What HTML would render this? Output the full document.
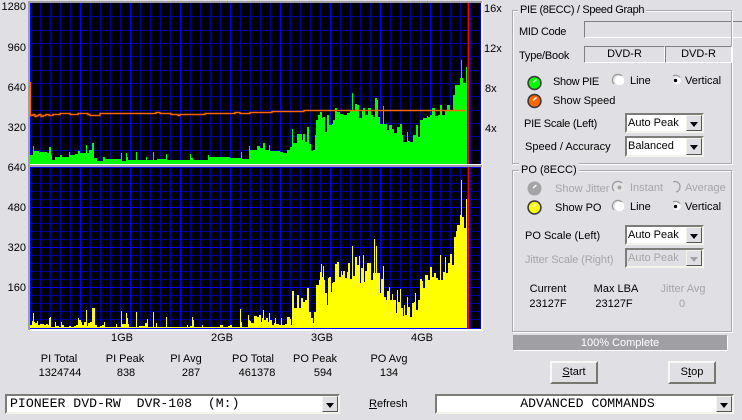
<!DOCTYPE html>
<html><head><meta charset="utf-8"><style>
html,body{margin:0;padding:0;width:742px;height:420px;overflow:hidden;background:#e0dfe3}
body{position:relative;font:11px/14px "Liberation Sans",sans-serif;color:#000}
.t{position:absolute;white-space:nowrap;height:14px;line-height:14px}
.c{transform:translateX(-50%)}
.r{text-align:right}
.g{color:#a6a6a8}
.gb{position:absolute;border:1px solid #a9a9ab;box-shadow:inset 1px 1px 0 #fff,1px 1px 0 #fff}
.lg{position:absolute;background:#e0dfe3;padding:0 2px;height:14px;line-height:14px;white-space:nowrap}
.sk{position:absolute;box-sizing:border-box;border:1px solid;border-color:#808080 #fff #fff #808080}
.cb{position:absolute;box-sizing:border-box;background:#fff;border:2px solid;border-color:#7c7c78 #f4f3ec #f4f3ec #7c7c78;outline:0;line-height:17px;padding-left:1px;white-space:nowrap}
.cb.d{background:#e0dfe3;color:#a6a6a8}
.ar{position:absolute;right:0;top:0;bottom:0;width:16px;background:#e0dfe3;box-sizing:border-box;border:1px solid;border-color:#f4f3ec #555 #555 #f4f3ec}
.ar:after{content:"";position:absolute;left:3px;top:6px;border:4px solid transparent;border-top:5px solid #000;border-bottom:0}
.cb.d .ar:after{border-top-color:#a0a0a0}
.mono{font:13.2px/16px "Liberation Mono",monospace;white-space:pre;padding-left:3px}
.btn{position:absolute;box-sizing:border-box;width:48px;height:23px;background:#e0dfe3;border:2px solid;border-color:#f8f8f6 #77776f #77776f #f8f8f6;text-align:center;line-height:19px}
</style></head><body>
<svg style="position:absolute;left:0;top:0" width="742" height="420" shape-rendering="crispEdges">
<rect x="28" y="0" width="455" height="331" fill="#fff"/>
<rect x="28" y="0" width="455" height="1" fill="#e0dfe3"/>
<rect x="28" y="1" width="454" height="2" fill="#a0a0a4"/>
<rect x="28" y="1" width="2" height="329" fill="#a0a0a4"/>
<rect x="28" y="165" width="454" height="2" fill="#a0a0a4"/>
<rect x="30" y="3" width="451" height="161" fill="#000"/>
<rect x="30" y="167" width="451" height="162" fill="#000"/>
<path fill="none" stroke="#00009c" d="M40.5 3V164M50.5 3V164M60.5 3V164M70.5 3V164M90.5 3V164M100.5 3V164M110.5 3V164M120.5 3V164M140.5 3V164M150.5 3V164M160.5 3V164M170.5 3V164M190.5 3V164M200.5 3V164M210.5 3V164M220.5 3V164M240.5 3V164M250.5 3V164M260.5 3V164M270.5 3V164M290.5 3V164M300.5 3V164M310.5 3V164M320.5 3V164M340.5 3V164M350.5 3V164M360.5 3V164M370.5 3V164M390.5 3V164M400.5 3V164M410.5 3V164M420.5 3V164M440.5 3V164M450.5 3V164M460.5 3V164M470.5 3V164
M40.5 167V329M50.5 167V329M60.5 167V329M70.5 167V329M90.5 167V329M100.5 167V329M110.5 167V329M120.5 167V329M140.5 167V329M150.5 167V329M160.5 167V329M170.5 167V329M190.5 167V329M200.5 167V329M210.5 167V329M220.5 167V329M240.5 167V329M250.5 167V329M260.5 167V329M270.5 167V329M290.5 167V329M300.5 167V329M310.5 167V329M320.5 167V329M340.5 167V329M350.5 167V329M360.5 167V329M370.5 167V329M390.5 167V329M400.5 167V329M410.5 167V329M420.5 167V329M440.5 167V329M450.5 167V329M460.5 167V329M470.5 167V329
M30 16.5H481M30 30.5H481M30 43.5H481M30 56.5H481M30 70.5H481M30 83.5H481M30 96.5H481M30 110.5H481M30 123.5H481M30 136.5H481M30 150.5H481
M30 175.5H481M30 183.5H481M30 191.5H481M30 199.5H481M30 215.5H481M30 223.5H481M30 231.5H481M30 239.5H481M30 255.5H481M30 263.5H481M30 271.5H481M30 279.5H481M30 295.5H481M30 303.5H481M30 311.5H481M30 319.5H481"/>
<path fill="none" stroke="#0000ff" d="M30.5 3V164M80.5 3V164M130.5 3V164M180.5 3V164M230.5 3V164M280.5 3V164M330.5 3V164M380.5 3V164M430.5 3V164M480.5 3V164
M30.5 167V329M80.5 167V329M130.5 167V329M180.5 167V329M230.5 167V329M280.5 167V329M330.5 167V329M380.5 167V329M430.5 167V329M480.5 167V329
M30 207.5H481M30 247.5H481M30 287.5H481M30 328.5H481M30 167.5H481"/>
<!-- green PIE bars -->
<path fill="#00ff00" d="M30 164V155H33V146H34V151H39V153H40V152H45V152H47V153H49V147H51V155H52V160H55V157H60V155H62V157H69V152H70V155H75V154H78V151H80V153H86V145H87V153H89V150H92V143H94V158H97V161H103V157H105V159H121V153H122V161H126V153H127V157H128V160H136V152H137V160H146V157H147V160H153V152H154V160H157V159H166V154H167V160H190V154H191V158H193V160H208V155H209V157H230V158H241V152H242V159H249V146H250V150H257V146H260V148H263V143H265V150H269V145H270V151H280V152H283V153H287V150H290V147H292V129H293V143H297V134H302V140H303V134H305V142H307V127H309V144H311V151H313V150H315V135H316V120H318V115H320V112H322V118H323V117H325V132H327V115H329V125H332V124H333V120H335V108H337V112H340V114H343V115H347V113H350V110H352V93H353V110H355V104H357V105H359V118H362V110H363V108H365V115H368V108H371V115H373V117H375V98H377V100H378V117H380V124H383V106H384V124H387V130H389V125H392V129H394V133H397V127H400V124H402V135H403V142H407V132H408V141H410V142H413V135H416V125H418V137H420V120H423V118H427V116H428V117H430V115H432V108H435V116H438V115H440V105H442V115H445V110H447V105H450V110H453V95H455V85H458V85H460V78H461V60H462V78H463V83H466V67H467V164Z"/>
<!-- orange speed line -->
<path fill="none" stroke="#ff6600" stroke-width="1.4" shape-rendering="auto" d="M30.5 82V116.5M30 115.5H33V114.5H35V116.5H37V115.5H39V114.5H41V116.5H43V115.5H46V114.5H49V115.5H53V114.5H60V113.5H70V114.5H78V113.5H88V114.5H90V115.5H100V113.5H156V112.5H160V113.5H171V114.5H178V115.5H180V114.5H205V113.5H235V112.5H240V113.5H250V112.5H272V111.5H304V110.5H465"/>
<!-- yellow PO bars -->
<path fill="#ffff00" d="M30 328V325H32V321H33V313H34V322H35V323H37V321H38V325H40V324H44V325H46V324H48V325H49V318H50V317H51V327H55V322H56V326H59V327H61V322H62V325H64V327H69V326H71V327H74V326H76V325H78V318H79V320H81V322H82V325H84V322H86V310H87V326H88V323H90V322H92V308H95V325H97V327H100V326H102V325H104V322H105V327H116V324H117V327H121V311H122V324H126V313H127V318H128V324H129V327H136V312H137V327H139V326H145V323H147V319H148V327H153V312H154V327H156V323H157V327H166V317H167V327H187V325H188V327H190V326H192V317H193V320H194V327H202V325H203V327H220V325H223V327H228V326H230V325H232V327H240V309H241V322H242V327H248V315H249V320H250V321H251V323H254V316H257V317H259V315H261V322H262V318H263V310H264V320H266V318H268V322H269V313H270V320H272V325H274V323H275V318H276V324H279V325H281V318H282V325H285V324H287V317H290V319H291V325H292V291H294V308H297V295H299V308H301V298H303V302H305V300H307V288H309V312H311V318H313V323H314V312H316V285H319V280H320V272H321V264H322V277H323V266H324V280H325V293H327V305H328V278H329V277H331V292H332V283H333V282H335V264H337V262H339V277H341V271H342V275H343V271H345V278H347V272H348V263H350V279H352V246H353V276H355V257H357V265H359V256H360V283H361V268H363V255H364V282H365V271H367V263H369V263H371V280H373V273H374V239H375V273H376V246H377V273H380V293H381V279H383V266H384V297H386V300H387V291H389V287H390V300H392V294H393V300H396V313H397V290H398V302H400V289H401V308H403V316H404V305H405V315H407V297H408V307H410V317H412V303H414V302H415V293H416V310H418V300H420V279H422V281H423V288H425V275H428V280H430V267H432V277H434V273H436V278H438V280H440V255H441V280H443V272H445V257H446V273H448V263H450V254H452V265H454V237H456V231H457V225H460V215H461V180H462V217H464V228H466V199H467V328Z"/>
<rect x="468" y="3" width="1" height="161" fill="#ff0000"/>
<rect x="468" y="167" width="1" height="162" fill="#ff0000"/>
<rect x="467" y="3" width="1" height="161" fill="#c00000" opacity=".5"/>
<rect x="467" y="167" width="1" height="162" fill="#c00000" opacity=".5"/>
</svg>

<span class="t r" style="right:716px;top:0">1280</span>
<span class="t r" style="right:716px;top:41px">960</span>
<span class="t r" style="right:716px;top:81px">640</span>
<span class="t r" style="right:716px;top:121px">320</span>
<span class="t r" style="right:716px;top:161px">640</span>
<span class="t r" style="right:716px;top:201px">480</span>
<span class="t r" style="right:716px;top:241px">320</span>
<span class="t r" style="right:716px;top:281px">160</span>
<span class="t" style="left:484px;top:2px">16x</span>
<span class="t" style="left:484px;top:42px">12x</span>
<span class="t" style="left:485px;top:82px">8x</span>
<span class="t" style="left:485px;top:122px">4x</span>

<span class="t c" style="left:122px;top:331px">1GB</span>
<span class="t c" style="left:222px;top:331px">2GB</span>
<span class="t c" style="left:322px;top:331px">3GB</span>
<span class="t c" style="left:422px;top:331px">4GB</span>

<span class="t c" style="left:59px;top:352px">PI Total</span>
<span class="t c" style="left:60px;top:366px">1324744</span>
<span class="t c" style="left:125px;top:352px">PI Peak</span>
<span class="t c" style="left:126px;top:366px">838</span>
<span class="t c" style="left:186px;top:352px">PI Avg</span>
<span class="t c" style="left:191px;top:366px">287</span>
<span class="t c" style="left:253px;top:352px">PO Total</span>
<span class="t c" style="left:257px;top:366px">461378</span>
<span class="t c" style="left:315px;top:352px">PO Peak</span>
<span class="t c" style="left:323px;top:366px">594</span>
<span class="t c" style="left:389px;top:352px">PO Avg</span>
<span class="t c" style="left:389px;top:366px">134</span>

<!-- PIE group -->
<div class="sk" style="left:584px;top:21px;width:158px;height:17px;border-right:0"></div>
<div class="gb" style="left:512px;top:10px;width:218px;height:152px"></div>
<span class="lg" style="left:518px;top:3px;letter-spacing:-.33px">PIE (8ECC) / Speed Graph</span>
<span class="t" style="left:519px;top:25px;letter-spacing:-.3px">MID Code</span>
<span class="t" style="left:519px;top:49px;letter-spacing:-.2px">Type/Book</span>
<div class="sk" style="left:584px;top:46px;width:81px;height:17px;text-align:center;line-height:14px;background:#e0dfe3">DVD-R</div>
<div class="sk" style="left:665px;top:46px;width:67px;height:17px;text-align:center;line-height:14px;background:#e0dfe3">DVD-R</div>
<span class="t" style="left:553px;top:75px;letter-spacing:-.3px">Show PIE</span>
<span class="t" style="left:630px;top:74px">Line</span>
<span class="t" style="left:685px;top:74px">Vertical</span>
<span class="t" style="left:553px;top:94px">Show Speed</span>
<span class="t" style="left:524px;top:117px;letter-spacing:-.25px">PIE Scale (Left)</span>
<span class="t" style="left:525px;top:140px">Speed / Accuracy</span>
<div class="cb" style="left:625px;top:113px;width:79px;height:20px">Auto Peak<i class="ar"></i></div>
<div class="cb" style="left:625px;top:136px;width:79px;height:21px">Balanced<i class="ar"></i></div>

<!-- PO group -->
<div class="gb" style="left:512px;top:170px;width:218px;height:160px"></div>
<span class="lg" style="left:519px;top:163px">PO (8ECC)</span>
<span class="t g" style="left:555px;top:182px">Show Jitter</span>
<span class="t g" style="left:630px;top:181px">Instant</span>
<span class="t g" style="left:685px;top:181px">Average</span>
<span class="t" style="left:555px;top:201px">Show PO</span>
<span class="t" style="left:630px;top:200px">Line</span>
<span class="t" style="left:685px;top:200px">Vertical</span>
<span class="t" style="left:525px;top:229px">PO Scale (Left)</span>
<span class="t g" style="left:525px;top:253px;letter-spacing:-.1px">Jitter Scale (Right)</span>
<div class="cb" style="left:625px;top:225px;width:79px;height:20px">Auto Peak<i class="ar"></i></div>
<div class="cb d" style="left:625px;top:248px;width:79px;height:20px">Auto Peak<i class="ar"></i></div>
<span class="t c" style="left:548px;top:282px">Current</span>
<span class="t c" style="left:548px;top:297px">23127F</span>
<span class="t c" style="left:616px;top:282px">Max LBA</span>
<span class="t c" style="left:614px;top:297px">23127F</span>
<span class="t c g" style="left:683px;top:282px">Jitter Avg</span>
<span class="t c g" style="left:682px;top:297px">0</span>

<!-- LEDs and radios -->
<svg style="position:absolute;left:0;top:0" width="742" height="420">
<g stroke="#3a3a3a" stroke-width="1.6">
<circle cx="534.5" cy="83" r="6.4" fill="#00ff00"/>
<circle cx="534.5" cy="101" r="6.4" fill="#ff6600"/>
<circle cx="534.5" cy="207.5" r="6.4" fill="#ffff00"/>
</g>
<circle cx="534.5" cy="188.5" r="7" fill="#a4a4a6"/>
<g stroke="#fff" stroke-width="1.4" fill="none">
<path d="M533 82.5L536.5 79.5M533 100.5L536.5 97.5M533 207L536.5 204M533 188L536.5 185"/>
</g>
<g>
<path d="M614 84A5.6 5.6 0 0 1 622 76" fill="none" stroke="#9a9a9a" stroke-width="1.2"/><circle cx="619.5" cy="80.5" r="4.8" fill="#fff"/>
<path d="M614 210A5.6 5.6 0 0 1 622 202" fill="none" stroke="#9a9a9a" stroke-width="1.2"/><circle cx="619.5" cy="206.5" r="4.8" fill="#fff"/>
<path d="M614 191A5.6 5.6 0 0 1 622 183" fill="none" stroke="#9a9a9a" stroke-width="1.2"/><circle cx="619.5" cy="187.5" r="4.8" fill="#e6e6e6"/><circle cx="619.5" cy="187.5" r="2" fill="#a4a4a6"/>
<path d="M673 76A5 5 0 0 1 680 78" fill="none" stroke="#9a9a9a" stroke-width="1.2"/><circle cx="677" cy="80.5" r="3.8" fill="#fff"/><circle cx="675.5" cy="80.5" r="1.7" fill="#000"/>
<path d="M673 202A5 5 0 0 1 680 204" fill="none" stroke="#9a9a9a" stroke-width="1.2"/><circle cx="677" cy="206.5" r="3.8" fill="#fff"/><circle cx="675.5" cy="206.5" r="1.7" fill="#000"/>
<path d="M673 182A5 5 0 0 1 680 187A5 5 0 0 1 676 192" fill="none" stroke="#9a9a9a" stroke-width="1.2"/>
</g>
</svg>

<!-- progress -->
<div style="position:absolute;left:513px;top:335px;width:214px;height:15px;background:#a0a0a4;box-shadow:1px 1px 0 #fff;color:#fff;text-align:center;line-height:16px">100% Complete</div>
<div class="btn" style="left:550px;top:361px"><u>S</u>tart</div>
<div class="btn" style="left:668px;top:361px">S<u>t</u>op</div>

<!-- bottom -->
<div class="cb mono" style="left:5px;top:394px;width:335px;height:20px">PIONEER DVD-RW  DVR-108  (M:)<i class="ar"></i></div>
<span class="t" style="left:369px;top:397px"><u>R</u>efresh</span>
<div class="cb mono" style="left:435px;top:394px;width:299px;height:20px;text-align:center;padding-left:6px">ADVANCED COMMANDS<i class="ar"></i></div>
</body></html>
